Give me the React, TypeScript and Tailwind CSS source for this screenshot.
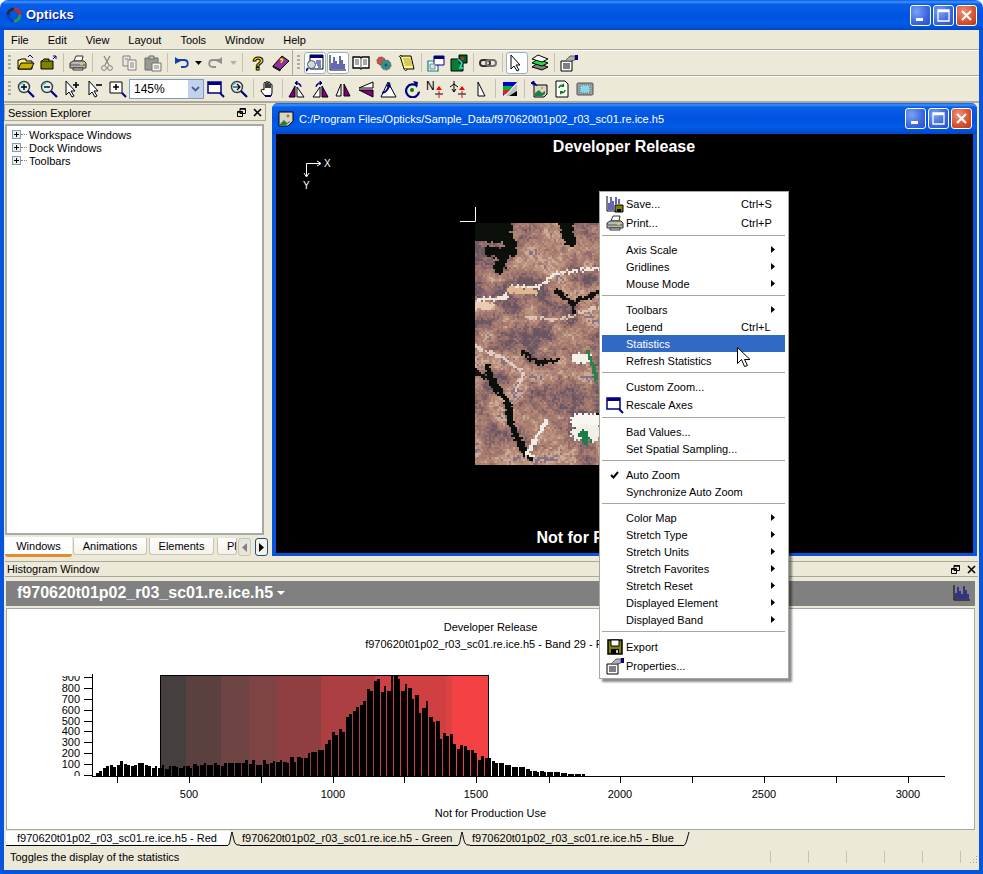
import type { ReactNode } from 'react'

// ---------- satellite picture (blocky raster built from noise + a few features)
const hash = (x: number, y: number) => {
  const s = Math.sin(x * 12.9898 + y * 78.233) * 43758.5453
  return s - Math.floor(s)
}
const smooth = (x: number, y: number) => {
  const ix = Math.floor(x)
  const iy = Math.floor(y)
  const fx = x - ix
  const fy = y - iy
  const a = hash(ix, iy) * (1 - fx) + hash(ix + 1, iy) * fx
  const b = hash(ix, iy + 1) * (1 - fx) + hash(ix + 1, iy + 1) * fx
  return a * (1 - fy) + b * fy
}
const palette = ['#6a5660', '#7d6066', '#916c6c', '#a3786f', '#b08474', '#bc937f', '#cbab98', '#8b7280']
type Feature = { pts: number[][]; r: number; c: string }
const features: Feature[] = [
  { pts: [[0, 4], [30, 4]], r: 8, c: '#0c100a' },
  { pts: [[4, 12], [32, 14], [36, 28]], r: 6, c: '#0c100a' },
  { pts: [[14, 28], [30, 30], [24, 46]], r: 5, c: '#0c100a' },
  { pts: [[92, 0], [96, 18]], r: 6, c: '#0c100a' },
  { pts: [[82, 68], [98, 81], [124, 71]], r: 2.2, c: '#14120e' },
  { pts: [[98, 81], [101, 92]], r: 2, c: '#14120e' },
  { pts: [[48, 131], [65, 141], [82, 138]], r: 2.2, c: '#14120e' },
  { pts: [[13, 145], [18, 161], [33, 181], [35, 201], [48, 228], [56, 238]], r: 3, c: '#0c100a' },
  { pts: [[0, 150], [10, 155]], r: 2, c: '#14120e' },
  { pts: [[122, 195], [124, 215]], r: 3, c: '#080818' },
  { pts: [[0, 78], [30, 76], [35, 65], [65, 65], [82, 50], [124, 45]], r: 1.3, c: '#efe6dc' },
  { pts: [[0, 84], [15, 84]], r: 4, c: '#e8cdb0' },
  { pts: [[35, 68], [60, 70]], r: 3, c: '#dfb892' },
  { pts: [[52, 95], [85, 98], [124, 85]], r: 1.3, c: '#dcc4b0' },
  { pts: [[0, 125], [28, 135], [48, 151], [42, 168]], r: 1.6, c: '#e0ccc0' },
  { pts: [[102, 136], [115, 136]], r: 5, c: '#f6f2ea' },
  { pts: [[58, 235], [52, 232], [72, 201]], r: 2, c: '#f2ece4' },
  { pts: [[104, 200], [121, 200]], r: 7, c: '#f8f6f0' },
  { pts: [[106, 212], [119, 212]], r: 8, c: '#f2f0e6' },
  { pts: [[109, 212], [112, 220]], r: 4, c: '#1f7a4c' },
  { pts: [[114, 131], [123, 158]], r: 2, c: '#2e7f4c' },
]
const segDist = (px: number, py: number, a: number[], b: number[]) => {
  const dx = b[0] - a[0]
  const dy = b[1] - a[1]
  const t = Math.max(0, Math.min(1, ((px - a[0]) * dx + (py - a[1]) * dy) / (dx * dx + dy * dy)))
  return Math.hypot(px - a[0] - t * dx, py - a[1] - t * dy)
}
const satellite = (() => {
  const groups: Record<string, string> = {}
  for (let y = 0; y < 122; y++) {
    for (let x = 0; x < 63; x++) {
      const n = smooth(x / 7, y / 7) * 0.55 + smooth(x / 2.5, y / 2.5) * 0.25 + hash(x, y) * 0.2
      let c = palette[Math.min(7, Math.max(0, Math.floor((n - 0.22) * 13)))]
      for (const f of features) {
        for (let i = 0; i < f.pts.length - 1; i++) {
          if (segDist(x * 2 + 1, y * 2 + 1, f.pts[i], f.pts[i + 1]) < f.r + (hash(x + 3, y + 9) - 0.5) * 3) c = f.c
        }
      }
      groups[c] = (groups[c] || '') + `M${x * 2} ${y * 2}h2v2h-2z`
    }
  }
  return Object.entries(groups)
})()

// ---------- histogram data
const bars = [30,50,70,90,105,85,105,135,110,105,95,100,115,115,100,95,75,90,75,100,65,90,90,78,75,90,90,72,110,90,100,115,100,100,115,105,90,118,118,118,118,118,118,148,110,148,100,105,150,110,120,135,125,148,125,118,172,125,172,165,165,210,220,220,240,240,290,330,400,375,430,400,540,565,600,630,655,690,795,780,875,890,770,830,780,925,930,890,780,845,810,710,740,580,620,690,540,495,505,340,395,370,385,295,245,280,275,240,240,210,150,185,165,165,135,115,115,118,105,100,78,85,85,85,68,45,45,40,45,40,40,40,38,38,30,25,18,22,15,15,15]
const bands: [number, number, string][] = [
  [160, 186, '#463f3f'], [186, 221, '#5b4040'], [221, 249, '#6e4343'], [249, 277, '#7e4344'],
  [277, 321, '#8f3f42'], [321, 375, '#ab3f41'], [375, 446, '#d04043'], [446, 452, '#dd4242'], [452, 488, '#f44144'],
]

// ---------- icons
const I = ({ children }: { children: ReactNode }) => (
  <svg width="18" height="18" viewBox="0 0 18 18" className="block">{children}</svg>
)
const Mag = ({ children }: { children?: ReactNode }) => (
  <I>
    <circle cx="7" cy="7" r="5.5" fill="#dff0f4" stroke="#3a3a3a" strokeWidth="1.4" />
    <path d="M3 5a4 4 0 0 1 3-2" stroke="#35c8d8" strokeWidth="1.5" fill="none" />
    <path d="M11 11l6 6" stroke="#000080" strokeWidth="2.2" />
    {children}
  </I>
)
const OpenIcon = () => (
  <I>
    <path d="M1 15V6h2l1-1h5v2h6v8z" fill="#fff27a" stroke="#000" />
    <path d="M1 15l3-6h13l-3 6z" fill="#c8b400" stroke="#000" />
    <path d="M11 3l2-2 3 3" stroke="#000080" fill="none" />
  </I>
)
const OpenDocIcon = () => (
  <I>
    <path d="M1 15V7h12v8z" fill="#808000" stroke="#000" />
    <path d="M2 7l2-2h5v2" fill="#808000" stroke="#000" />
    <path d="M13 5l3-3M13 2h3v3" stroke="#000080" fill="none" />
  </I>
)
const PrintIcon = () => (
  <I>
    <path d="M5 7l2-5h7l-1 5z" fill="#fff" stroke="#333" />
    <path d="M1 9l3-2h11l2 2v5H1z" fill="#b8b8b8" stroke="#333" />
    <path d="M1 11h16" stroke="#555" />
    <path d="M4 14h10v2H4z" fill="#e8e8e8" stroke="#333" />
    <path d="M11 10h3" stroke="#ffd800" strokeWidth="1.5" />
  </I>
)
const CutIcon = () => (
  <I>
    <path d="M6 2l5 9M12 2l-5 9" stroke="#808080" fill="none" strokeWidth="1.2" />
    <circle cx="6" cy="14" r="2.4" fill="none" stroke="#808080" />
    <circle cx="12" cy="14" r="2.4" fill="none" stroke="#808080" />
  </I>
)
const CopyIcon = () => (
  <I>
    <path d="M2 2h7v10H2z" fill="#e8e8e0" stroke="#808080" />
    <path d="M7 6h8v10H7z" fill="#f4f4ec" stroke="#808080" />
    <path d="M9 9h4M9 11h4M9 13h4M4 5h3" stroke="#808080" />
  </I>
)
const PasteIcon = () => (
  <I>
    <path d="M1 4h13v12H1z" fill="#9a9a92" stroke="#6a6a6a" />
    <path d="M5 2h5v3H5z" fill="#c8c8c0" stroke="#6a6a6a" />
    <path d="M8 9h9v8H8z" fill="#f4f4ec" stroke="#707070" />
    <path d="M10 12h5M10 14h5" stroke="#808080" />
  </I>
)
const UndoIcon = ({ c, flip }: { c: string; flip?: boolean }) => (
  <I>
    <g transform={flip ? 'translate(18 0) scale(-1 1)' : undefined}>
      <path d="M3 6h8c5 0 5 7 0 7H8" stroke={c} strokeWidth="1.8" fill="none" />
      <path d="M2 3v7l6-3z" fill={c} />
    </g>
  </I>
)
const HelpIcon = () => (
  <I>
    <text x="9" y="16" textAnchor="middle" fontSize="19" fontWeight="700" fill="#ffe800" stroke="#000" strokeWidth="1" fontFamily="Liberation Sans">?</text>
  </I>
)
const PurpleBook = () => (
  <I>
    <path d="M1 12l9-10 7 5-9 9z" fill="#9030a0" stroke="#000" />
    <path d="M1 12l7 4v1l-7-4z" fill="#f8e0a0" stroke="#000" />
    <path d="M8 6c2-2 4 0 2 1l-1 2" stroke="#ffe800" strokeWidth="1.4" fill="none" />
  </I>
)
const SessionIcon = () => (
  <I>
    <path d="M4 1h13v14H4z" fill="#fff" stroke="#000" />
    <path d="M4 1h13v3H4z" fill="#000080" />
    <path d="M10 7h5M10 9h5M11 11h4M12 13h3" stroke="#000080" />
    <circle cx="5.5" cy="10.5" r="4" fill="#c8dee8" stroke="#555" />
    <path d="M2 14l-2 3" stroke="#000080" strokeWidth="2" />
  </I>
)
const HistIcon = () => (
  <I>
    <path d="M1 1v15h16" stroke="#000" fill="none" />
    <path d="M3 15V9M5 15V3M7 15V7M9 15V10M11 15V2M13 15V6M15 15V10" stroke="#00008b" strokeWidth="1.2" />
  </I>
)
const OpenBookIcon = () => (
  <I>
    <path d="M1 3h7l1 1 1-1h7v11h-7l-1 1-1-1H1z" fill="#fff" stroke="#000" strokeWidth="1.3" />
    <path d="M9 4v11M3 6h4M3 8h4M3 10h4M11 6h4M11 8h4M11 10h4" stroke="#555" />
  </I>
)
const GearsIcon = () => (
  <I>
    <circle cx="6" cy="7" r="4" fill="#c05848" stroke="#804030" strokeDasharray="2 1" />
    <circle cx="11" cy="11" r="5" fill="#309098" stroke="#806040" strokeDasharray="2 1" />
    <circle cx="11" cy="11" r="1.5" fill="#205860" />
  </I>
)
const ScrollIcon = () => (
  <I>
    <path d="M2 2h11l3 13H6z" fill="#fff680" stroke="#000" />
    <path d="M5 5h8M6 7h8M6 9h8M7 11h8" stroke="#a8a040" />
    <path d="M1 3c1-2 3-2 3 0M6 15c1 2 3 2 3 0" stroke="#000" fill="#d8d8d0" />
  </I>
)
const WindowsIcon = () => (
  <I>
    <path d="M1 7h10v10H1z" fill="#fff" stroke="#008080" strokeWidth="1.2" />
    <path d="M7 2h10v9H7z" fill="#fff" stroke="#000080" />
    <path d="M7 2h10v3H7z" fill="#000080" />
    <path d="M3 10h5v5H3z" fill="#d0e8e8" stroke="#808080" />
  </I>
)
const GreenMapIcon = () => (
  <I>
    <path d="M1 5h12v12H1z" fill="#008030" stroke="#000" />
    <path d="M9 1h8v8H9z" fill="#006020" stroke="#000" />
    <path d="M8 5l4 4-2 5h3" stroke="#20e0e0" strokeWidth="1.5" fill="none" />
    <path d="M11 3h3v3h-3zM3 9h1v1H3zM5 13h1v1H5z" fill="#b03020" />
  </I>
)
const LinkIcon = () => (
  <I>
    <rect x="1" y="6" width="10" height="6" rx="3" fill="none" stroke="#303030" strokeWidth="2" />
    <rect x="7" y="6" width="10" height="6" rx="3" fill="none" stroke="#707070" strokeWidth="2" />
  </I>
)
const ArrowIcon = ({ children }: { children?: ReactNode }) => (
  <I>
    <path d="M3 1v14l3-3 3 5 2-1-3-5h4z" fill="#fff" stroke="#000" />
    {children}
  </I>
)
const LayersIcon = () => (
  <I>
    <path d="M1 13l6-4 10 4-6 3z" fill="#808080" stroke="#000" />
    <path d="M1 9l6-4 10 4-6 3z" fill="#20e040" stroke="#000" />
    <path d="M1 5l6-4 10 4-6 3z" fill="#fff" stroke="#000" />
  </I>
)
const PropsIcon = () => (
  <I>
    <path d="M1 7h11v10H1z" fill="#fff" stroke="#000" />
    <path d="M3 10h7M3 12h7M3 14h7" stroke="#000" />
    <path d="M5 7l5-5h5v4l-5 1z" fill="#b0b0b0" stroke="#606060" />
    <path d="M15 1h3v5h-3z" fill="#000080" />
  </I>
)
const BoxZoomIcon = () => (
  <I>
    <path d="M1 2h12v11H1z" fill="#fff" stroke="#000" />
    <path d="M4 7h6M7 4v6" stroke="#000" strokeWidth="1.5" />
    <path d="M13 13l4 4" stroke="#000080" strokeWidth="2" />
  </I>
)
const FitIcon = () => (
  <I>
    <path d="M1 2h13v11H1z" fill="#fff" stroke="#000080" strokeWidth="1.5" />
    <path d="M1 2h13v3H1z" fill="#000080" />
    <path d="M13 13l4 4" stroke="#000080" strokeWidth="2" />
  </I>
)
const HandIcon = () => (
  <I>
    <path d="M5 9V3.5a1 1 0 0 1 2 0V8V2.5a1 1 0 0 1 2 0V8V3a1 1 0 0 1 2 0v5V5a1 1 0 0 1 2 0v8l-1 3H6l-4-5c0-2 2-2 3-1z" fill="#fff" stroke="#000" />
    <path d="M6 16h6" stroke="#000080" strokeWidth="2" />
  </I>
)
const purple = '#800080'
const TriIcon = ({ v }: { v: number }) => {
  if (v === 0)
    return (
      <I>
        <path d="M1 17l6-11v11z" fill={purple} stroke="#000" />
        <path d="M9 17V7l7 10z" fill="#fff" stroke="#000" />
        <path d="M13 7c0-3-2-4-4-4M9 1v4l-2-2z" stroke="#000080" fill="#000080" />
      </I>
    )
  if (v === 1)
    return (
      <I>
        <path d="M2 17l7-10v10z" fill="#fff" stroke="#000" />
        <path d="M11 17V6l6 11z" fill={purple} stroke="#000" />
        <path d="M5 7c0-3 2-4 4-4M9 1v4l2-2z" stroke="#000080" fill="#000080" />
      </I>
    )
  if (v === 2)
    return (
      <I>
        <path d="M2 16l5-12v12z" fill="#fff" stroke="#000" />
        <path d="M10 16V4l6 12z" fill={purple} stroke="#000" />
      </I>
    )
  if (v === 3)
    return (
      <I>
        <path d="M2 8l14-6v6z" fill="#fff" stroke="#000" />
        <path d="M2 10l14 7v-7z" fill={purple} stroke="#000" />
      </I>
    )
  return (
    <I>
      <path d="M8 2l8 15H1z" fill="#fff" stroke="#000" />
      <path d="M2 13c3 0 6-3 7-8" stroke="#000080" strokeWidth="2" fill="none" />
      <path d="M6 6l4-4 1 6z" fill="#000080" />
    </I>
  )
}
const RotateIcon = () => (
  <I>
    <path d="M14 6a6.5 6.5 0 1 0 2 6" stroke="#000080" strokeWidth="2.2" fill="none" />
    <path d="M10 1l5 1-1 6z" fill="#000080" />
    <circle cx="9" cy="10" r="2" fill="#008000" />
    <path d="M16 11h1v1h-1z" fill="#808080" />
  </I>
)
const NorthIcon = () => (
  <I>
    <text x="0" y="10" fontSize="12" fontFamily="Liberation Sans" fill="#000">N</text>
    <path d="M13 18V7" stroke="#f00" strokeDasharray="3 1" />
    <path d="M10 10l3-4 3 4z" fill="#f00" />
    <path d="M9 14h8" stroke="#000" />
  </I>
)
const CompassIcon = () => (
  <I>
    <path d="M5 1v11M1 7l4-3 4 3M3 9l2 3 2-3" stroke="#000" fill="none" />
    <path d="M13 18V7" stroke="#f00" strokeDasharray="3 1" />
    <path d="M10 10l3-4 3 4z" fill="#f00" />
    <path d="M9 14h8" stroke="#000" />
  </I>
)
const ThinTri = () => (
  <I>
    <path d="M6 2l7 14H6z" fill="#fff" stroke="#000" />
  </I>
)
const ColorIcon = () => (
  <I>
    <path d="M2 2h14L2 16z" fill="#0000d0" />
    <path d="M2 2h14l-4 4H2z" fill="#0000d0" />
    <path d="M2 6h10l-3 4H2z" fill="#00b030" />
    <path d="M2 10h7l-4 4H2z" fill="#e02020" />
    <path d="M16 4v12H5z" fill="#c0c0c0" />
    <path d="M16 11v5H8z" fill="#000" />
  </I>
)
const ImageArrowIcon = () => (
  <I>
    <path d="M4 5h13v9l-3 3H4z" fill="#d8d4c8" stroke="#000" />
    <path d="M5 13l4-3 3 3 3-2v3l-3 2H5z" fill="#208040" />
    <circle cx="12" cy="8" r="1" fill="#c0a000" />
    <path d="M1 3h4l2 3M1 3l3-2v4z" stroke="#000080" fill="#000080" />
  </I>
)
const RefreshDocIcon = () => (
  <I>
    <path d="M3 1h9l3 3v13H3z" fill="#fff" stroke="#000" />
    <path d="M6 8a3 3 0 0 1 5-2M12 10a3 3 0 0 1-5 2" stroke="#008000" strokeWidth="1.5" fill="none" />
    <path d="M11 3v4h-3zM7 15v-4h3z" fill="#008000" />
  </I>
)
const MonitorIcon = () => (
  <I>
    <rect x="1" y="3" width="16" height="12" rx="1" fill="#a0a0a0" stroke="#505050" />
    <rect x="4" y="5" width="10" height="8" fill="#88d8e8" stroke="#607080" strokeDasharray="1 1" />
  </I>
)
const SaveIcon = () => (
  <I>
    <path d="M2 2h14v14H2z" fill="#808000" stroke="#000" strokeWidth="1.5" />
    <path d="M5 2h8v6H5z" fill="#fff" stroke="#000" />
    <path d="M5 11h8v5H5z" fill="#000" />
    <path d="M10 12h2v3h-2z" fill="#c0c0c0" />
  </I>
)
const HistSaveIcon = () => (
  <I>
    <path d="M1 1v15h8" stroke="#000" fill="none" />
    <path d="M3 15V8M5 15V2M7 15V6M10 9V2M13 9V4" stroke="#00008b" strokeWidth="1.2" />
    <path d="M9 10h8v7H9z" fill="#808000" stroke="#000" />
    <path d="M11 14h4v3h-4z" fill="#000" />
  </I>
)
const TreePlus = () => (
  <span className="relative w-[9px] h-[9px] border border-[#7f9db9] bg-[#eeeee6] flex items-center justify-center shrink-0">
    <span className="absolute w-[5px] h-[1px] bg-black" />
    <span className="absolute w-[1px] h-[5px] bg-black" />
  </span>
)

// ---------- chrome pieces
const Grip = ({ className = 'w-[10px]' }: { className?: string }) => (
  <span className={`flex justify-center shrink-0 ${className}`}>
    <span className="w-[3px] h-[16px] bg-[repeating-linear-gradient(to_bottom,#b0ad9c_0_2px,transparent_2px_4px)]" />
  </span>
)
const Sep = ({ className = 'w-[6px]' }: { className?: string }) => (
  <span className={`flex justify-center shrink-0 ${className}`}>
    <span className="w-[1px] h-[19px] bg-[#c5c2b0]" />
  </span>
)
const Btn = ({ children, active, className = 'w-[23px]' }: { children?: ReactNode; active?: boolean; className?: string }) => (
  <span className={`flex items-center justify-center h-[24px] shrink-0 ${className}`}>
    <span className={`flex items-center justify-center w-[22px] h-[22px] rounded-[3px] ${active ? 'bg-white border border-[#9ab1cc]' : ''}`}>
      {children}
    </span>
  </span>
)
const Drop = ({ c }: { c: string }) => (
  <span className="w-[10px] flex justify-center shrink-0">
    <svg width="7" height="4" viewBox="0 0 7 4"><path d="M0 0h7L3.5 4z" fill={c} /></svg>
  </span>
)
const ToolRow = ({ children }: { children: ReactNode }) => (
  <div className="h-[26px] flex items-center border-t border-[#aca899] shadow-[inset_0_1px_0_#fff] shrink-0">{children}</div>
)
const WinBtn = ({ kind }: { kind: 'min' | 'max' | 'close' }) => (
  <span
    className={`w-[21px] h-[21px] rounded-[3px] border border-white flex items-center justify-center shrink-0 ${
      kind === 'close'
        ? 'bg-[radial-gradient(circle_at_35%_30%,#f09078,#d8502c_60%,#b83a18)]'
        : 'bg-[radial-gradient(circle_at_30%_30%,#7ba2f2,#3a66e0_60%,#2650c8)]'
    }`}
  >
    <svg width="13" height="13" viewBox="0 0 13 13">
      {kind === 'min' && <path d="M2 9h7v3H2z" fill="#fff" />}
      {kind === 'max' && <path d="M1 1h11v11H1zM1 2.5h11" fill="none" stroke="#fff" strokeWidth="1.3" />}
      {kind === 'close' && <path d="M2 2l9 9M11 2l-9 9" stroke="#fff" strokeWidth="2.2" />}
    </svg>
  </span>
)
const DockBtns = () => (
  <span className="flex items-center gap-[7px] shrink-0">
    <svg width="9" height="9" viewBox="0 0 9 9"><path d="M3 .5h5.5v5H3zM.5 3.5h5v5h-5z" fill="#ece9d8" stroke="#000" /><path d="M3 1h5.5M.5 4h5" stroke="#000" strokeWidth="1.4" /></svg>
    <svg width="9" height="9" viewBox="0 0 9 9"><path d="M1 1l7 7M8 1l-7 7" stroke="#000" strokeWidth="1.6" /></svg>
  </span>
)
const DockTab = ({ label, className }: { label: string; className: string }) => (
  <span className={`mt-[3px] h-[17px] border border-[#c8c4b4] border-t-0 rounded-b-[3px] bg-[linear-gradient(to_bottom,#fff,#f4f2ea)] flex items-center justify-center shrink-0 overflow-hidden ${className}`}>
    {label}
  </span>
)

type MenuItem =
  | { sep: true }
  | { label: string; short?: string; sub?: boolean; icon?: ReactNode; check?: boolean; hot?: boolean; tall?: boolean }
const menu: MenuItem[] = [
  { label: 'Save...', short: 'Ctrl+S', icon: <HistSaveIcon />, tall: true },
  { label: 'Print...', short: 'Ctrl+P', icon: <PrintIcon />, tall: true },
  { sep: true },
  { label: 'Axis Scale', sub: true },
  { label: 'Gridlines', sub: true },
  { label: 'Mouse Mode', sub: true },
  { sep: true },
  { label: 'Toolbars', sub: true },
  { label: 'Legend', short: 'Ctrl+L' },
  { label: 'Statistics', hot: true },
  { label: 'Refresh Statistics' },
  { sep: true },
  { label: 'Custom Zoom...' },
  { label: 'Rescale Axes', icon: <FitIcon />, tall: true },
  { sep: true },
  { label: 'Bad Values...' },
  { label: 'Set Spatial Sampling...' },
  { sep: true },
  { label: 'Auto Zoom', check: true },
  { label: 'Synchronize Auto Zoom' },
  { sep: true },
  { label: 'Color Map', sub: true },
  { label: 'Stretch Type', sub: true },
  { label: 'Stretch Units', sub: true },
  { label: 'Stretch Favorites', sub: true },
  { label: 'Stretch Reset', sub: true },
  { label: 'Displayed Element', sub: true },
  { label: 'Displayed Band', sub: true },
  { sep: true },
  { label: 'Export', icon: <SaveIcon />, tall: true },
  { label: 'Properties...', icon: <PropsIcon />, tall: true },
]

const ContextMenu = () => (
  <div className="absolute left-[599px] top-[191px] w-[190px] h-[488px] bg-white border border-[#aca899] pt-[2px] pl-[2px] pr-[3px] shadow-[3px_3px_2px_rgba(0,0,0,0.45)] z-10">
    {menu.map((m, i) =>
      'sep' in m ? (
        <div key={i} className="h-[9px] pt-[3px]"><div className="h-[1px] bg-[#aca899]" /></div>
      ) : (
        <div key={i} className={`flex items-center ${m.tall ? 'h-[19px]' : 'h-[17px]'} ${m.hot ? 'bg-[#316ac5] text-white' : ''}`}>
          <span className="w-[24px] pl-[1px] flex items-center justify-center shrink-0">
            {m.icon}
            {m.check && <svg width="9" height="8" viewBox="0 0 9 8"><path d="M1 4l2.5 2.5L8 1" stroke="#000" strokeWidth="2" fill="none" /></svg>}
          </span>
          <span className="w-[115px] shrink-0 whitespace-nowrap">{m.label}</span>
          <span className="flex-1 whitespace-nowrap">{m.short}</span>
          {m.sub && <svg width="4" height="7" viewBox="0 0 4 7" className="mr-[10px]"><path d="M0 0l4 3.5L0 7z" fill="#000" /></svg>}
        </div>
      ),
    )}
  </div>
)

const Tail = ({ fill, peak = true }: { fill?: string; peak?: boolean }) => (
  <svg width="12" height="15" viewBox="0 0 12 15" className="shrink-0 block">
    {fill && <path d="M0 0h3L0 15z" fill={fill} />}
    <path d={peak ? 'M0 14c2 0 2-6 4-13c2 7 2 13 6 13h2' : 'M0 14c2 0 2-6 4-13'} stroke="#000" fill="none" />
  </svg>
)

export default function App() {
  return (
    <div className="w-[983px] h-[874px] flex flex-col overflow-hidden bg-white text-[11px] leading-[14px] text-black font-['Liberation_Sans',sans-serif]">
      {/* title bar */}
      <div className="h-[30px] shrink-0 rounded-t-[8px] flex items-center pl-[6px] pr-[6px] bg-[linear-gradient(to_bottom,#0a5ae0_0px,#3d95ff_2px,#0a5fe8_4px,#0053e0_16px,#005ce8_24px,#0046c8_30px)]">
        <svg width="16" height="16" viewBox="0 0 16 16" className="mr-[4px]">
          <g fill="none" strokeWidth="3">
            <path d="M8 2a6 6 0 0 1 6 6" stroke="#d02818" />
            <path d="M14 8a6 6 0 0 1-6 6" stroke="#20a040" />
            <path d="M8 14a6 6 0 0 1-6-6" stroke="#1040c0" />
            <path d="M2 8a6 6 0 0 1 6-6" stroke="#1c3048" />
          </g>
        </svg>
        <span className="flex-1 text-[13px] font-bold text-white [text-shadow:1px_1px_0_#0f1089]">Opticks</span>
        <span className="flex gap-[2px]">
          <WinBtn kind="min" />
          <WinBtn kind="max" />
          <WinBtn kind="close" />
        </span>
      </div>

      {/* window body */}
      <div className="flex-1 min-h-0 flex flex-col border-x-4 border-b-4 border-[#0855dd] bg-[#ece9d8]">
        <div className="h-[19px] shrink-0 flex items-center gap-[19px] pl-[7px]">
          <span>File</span>
          <span>Edit</span>
          <span>View</span>
          <span>Layout</span>
          <span>Tools</span>
          <span>Window</span>
          <span>Help</span>
        </div>

        <ToolRow>
          <Grip />
          <Btn><OpenIcon /></Btn>
          <Btn><OpenDocIcon /></Btn>
          <Sep />
          <Btn><PrintIcon /></Btn>
          <Sep />
          <Btn><CutIcon /></Btn>
          <Btn><CopyIcon /></Btn>
          <Btn><PasteIcon /></Btn>
          <Sep />
          <Btn><UndoIcon c="#1040a8" /></Btn>
          <Drop c="#000" />
          <Btn className="w-[24px]"><UndoIcon c="#909090" flip /></Btn>
          <span className="w-[12px] flex justify-center"><Drop c="#b0b0b0" /></span>
          <Sep className="w-[7px]" />
          <Btn><HelpIcon /></Btn>
          <Btn><PurpleBook /></Btn>
          <span className="w-[1px] h-[26px] bg-[#aca899]" />
          <Grip />
          <Btn active><SessionIcon /></Btn>
          <Btn active><HistIcon /></Btn>
          <Btn><OpenBookIcon /></Btn>
          <Btn><GearsIcon /></Btn>
          <Btn><ScrollIcon /></Btn>
          <Sep />
          <Btn><WindowsIcon /></Btn>
          <Btn><GreenMapIcon /></Btn>
          <Sep />
          <Btn><LinkIcon /></Btn>
          <Sep />
          <Btn active><ArrowIcon /></Btn>
          <Btn><LayersIcon /></Btn>
          <Sep />
          <Btn><PropsIcon /></Btn>
        </ToolRow>

        <ToolRow>
          <Grip />
          <Btn><Mag><path d="M4 7h6M7 4v6" stroke="#000" strokeWidth="1.4" /></Mag></Btn>
          <Btn><Mag><path d="M4 7h6" stroke="#000" strokeWidth="1.4" /></Mag></Btn>
          <Btn><ArrowIcon><path d="M10 5h6M13 2v6" stroke="#000" strokeWidth="1.6" /></ArrowIcon></Btn>
          <Btn><ArrowIcon><path d="M10 5h6" stroke="#000" strokeWidth="1.6" /></ArrowIcon></Btn>
          <Btn><BoxZoomIcon /></Btn>
          <span className="w-[75px] h-[20px] shrink-0 border border-[#7f9db9] bg-white flex items-center pl-[4px]">
            <span className="flex-1 text-[12px]">145%</span>
            <span className="w-[15px] h-[18px] bg-[#c1d2ee] flex items-center justify-center">
              <svg width="9" height="6" viewBox="0 0 9 6"><path d="M1 1l3.5 3.5L8 1" stroke="#4d6185" strokeWidth="1.8" fill="none" /></svg>
            </span>
          </span>
          <Btn><FitIcon /></Btn>
          <Btn><Mag><path d="M3 7h7M7 4l3 3-3 3" stroke="#000" fill="none" strokeWidth="1.2" /></Mag></Btn>
          <Sep />
          <Btn><HandIcon /></Btn>
          <Sep />
          <Btn><TriIcon v={0} /></Btn>
          <Btn><TriIcon v={1} /></Btn>
          <Btn><TriIcon v={2} /></Btn>
          <Btn><TriIcon v={3} /></Btn>
          <Btn><TriIcon v={4} /></Btn>
          <Btn><RotateIcon /></Btn>
          <Btn><NorthIcon /></Btn>
          <Btn><CompassIcon /></Btn>
          <Btn><ThinTri /></Btn>
          <Sep />
          <Btn><ColorIcon /></Btn>
          <Sep />
          <Btn><ImageArrowIcon /></Btn>
          <Btn><RefreshDocIcon /></Btn>
          <Btn><MonitorIcon /></Btn>
        </ToolRow>
        <div className="h-[2px] bg-[#aca899] shrink-0" />

        {/* session explorer + image window */}
        <div className="h-[456px] shrink-0 flex">
          <div className="w-[262px] shrink-0 flex flex-col pt-[1px]">
            <div className="h-[17px] border border-[#aca899] flex items-center justify-between pl-[3px] pr-[3px] shrink-0">
              <span>Session Explorer</span>
              <DockBtns />
            </div>
            <div className="mt-[3px] ml-[1px] mr-[2px] h-[411px] border-2 border-[#a5aba5] bg-white pt-[2px] pl-[5px] shrink-0">
              {['Workspace Windows', 'Dock Windows', 'Toolbars'].map((t) => (
                <div key={t} className="h-[13px] flex items-center">
                  <TreePlus />
                  <span className="w-[6px] h-[1px] border-t border-dotted border-[#808080] mr-[2px]" />
                  <span>{t}</span>
                </div>
              ))}
            </div>
            <div className="h-[22px] flex gap-[1px] pl-[1px]">
              <span className="mt-[2px] w-[67px] h-[20px] bg-white border-b-[3px] border-[#e68b2c] rounded-b-[3px] flex items-center justify-center shrink-0">Windows</span>
              <DockTab label="Animations" className="w-[74px]" />
              <DockTab label="Elements" className="ml-[1px] w-[65px]" />
              <DockTab label="Plots" className="ml-[2px] w-[20px] justify-start pl-[9px]" />
              <span className="mt-[3px] w-[13px] h-[18px] border border-[#c8c4b4] rounded-[3px] bg-[#e8e6dc] flex items-center justify-center shrink-0">
                <svg width="5" height="9" viewBox="0 0 5 9"><path d="M5 0L0 4.5 5 9z" fill="#808080" /></svg>
              </span>
              <span className="ml-[3px] mt-[3px] w-[13px] h-[18px] border border-[#1c5180] rounded-[3px] bg-[#f4f2ea] flex items-center justify-center shrink-0">
                <svg width="5" height="9" viewBox="0 0 5 9"><path d="M0 0l5 4.5L0 9z" fill="#000" /></svg>
              </span>
            </div>
          </div>

          <div className="ml-[6px] w-[705px] h-[453px] flex flex-col border-x-4 border-b-[3px] border-[#0855dd] rounded-t-[6px] shrink-0">
            <div className="-mx-[4px] h-[31px] shrink-0 rounded-t-[6px] flex items-center pl-[6px] pr-[5px] gap-[5px] text-white bg-[linear-gradient(to_bottom,#0a5ae0_0px,#3d95ff_2px,#0a5fe8_4px,#0053e0_16px,#005ce8_24px,#0046c8_31px)]">
              <svg width="16" height="16" viewBox="0 0 16 16">
                <path d="M1 1h14v9l-5 5H1z" fill="#d8d4c8" stroke="#000" />
                <path d="M2 13l4-4 3 3 3-2v1l-4 3H2z" fill="#208040" />
                <circle cx="10" cy="5" r="1.4" fill="#a08000" />
              </svg>
              <span className="flex-1 whitespace-nowrap">C:/Program Files/Opticks/Sample_Data/f970620t01p02_r03_sc01.re.ice.h5</span>
              <span className="flex gap-[2px]">
                <WinBtn kind="min" />
                <WinBtn kind="max" />
                <WinBtn kind="close" />
              </span>
            </div>
            <div className="relative flex-1 bg-black text-white text-[16px] leading-[18px] font-bold flex flex-col items-center justify-between pt-[4px] pb-[6px] pr-[1px] overflow-hidden">
              <span>Developer Release</span>
              <span>Not for Production Use</span>
              <svg width="36" height="36" viewBox="0 0 36 36" className="absolute left-[25px] top-[24px]">
                <path d="M5.5 18V5.5H19M16 3l4 2.5-4 2.5M3 15l2.5 4 2.5-4" stroke="#fff" fill="none" />
                <text x="23" y="9" fontSize="10" fill="#fff" fontWeight="400" fontFamily="Liberation Sans">X</text>
                <text x="2" y="31" fontSize="10" fill="#fff" fontWeight="400" fontFamily="Liberation Sans">Y</text>
              </svg>
              <svg width="16" height="16" viewBox="0 0 16 16" className="absolute left-[184px] top-[73px]">
                <path d="M15.5 0v14.5H0" stroke="#fff" fill="none" />
              </svg>
              <svg width="125" height="244" viewBox="0 0 126 244" shapeRendering="crispEdges" className="absolute left-[199px] top-[88px]">
                {satellite.map(([c, d]) => (
                  <path key={c} d={d} fill={c} />
                ))}
              </svg>
            </div>
          </div>
        </div>

        {/* histogram window */}
        <div className="mx-[1px] mt-[2px] h-[16px] shrink-0 border-y border-[#aca899] flex items-center justify-between pl-[2px] pr-[2px]">
          <span>Histogram Window</span>
          <DockBtns />
        </div>
        <div className="ml-[2px] mr-[4px] mt-[4px] h-[25px] shrink-0 bg-[#808080] flex items-start justify-between pl-[11px] pr-[4px] text-white">
          <span className="h-[19px] mt-[1px] overflow-hidden text-[16px] leading-[21px] font-bold whitespace-nowrap flex items-start">
            f970620t01p02_r03_sc01.re.ice.h5
            <svg width="8" height="4" viewBox="0 0 8 4" className="ml-[4px] mt-[9px]"><path d="M0 0h8L4 4z" fill="#fff" /></svg>
          </span>
          <span className="mt-[3px]"><HistIcon /></span>
        </div>
        <div className="ml-[2px] mr-[4px] mt-[2px] h-[222px] shrink-0 bg-white border border-[#aca899] flex flex-col items-center">
          <div className="mt-[11px] h-[14px] whitespace-nowrap">Developer Release</div>
          <div className="mt-[3px] h-[14px] whitespace-nowrap">f970620t01p02_r03_sc01.re.ice.h5 - Band 29 - Red</div>
          <svg width="967" height="130" viewBox="7 676 967 130" shapeRendering="crispEdges" className="mt-[21px] shrink-0 block">
            <defs>
              <clipPath id="ylabels"><rect x="50" y="680" width="40" height="100" /></clipPath>
            </defs>
            {bands.map(([a, b, c]) => (
              <rect key={a} x={a} y="680" width={b - a} height="100" fill={c} />
            ))}
            <path d="M160.5 780V679.5H488.5V780" fill="none" stroke="#000" />
            {bars.map((v, i) => {
              const x0 = Math.round(96 + 3.47 * i)
              const x1 = Math.round(96 + 3.47 * (i + 1))
              return <rect key={i} x={x0} y={780 - v * 0.109} width={x1 - x0 - (i % 2 ? 1 : 0)} height={v * 0.109} fill="#000" />
            })}
            <rect x="92" y="678" width="1" height="103" fill="#000" />
            <rect x="92" y="780" width="853" height="1" fill="#000" />
            {[0, 100, 200, 300, 400, 500, 600, 700, 800, 900].map((v) => (
              <g key={v}>
                <rect x="84" y={Math.round(779 - v * 0.109)} width="9" height="1" fill="#000" />
                <text x="80" y={783 - v * 0.109} textAnchor="end" fontSize="11" clipPath="url(#ylabels)" shapeRendering="auto">{v}</text>
              </g>
            ))}
            {[117, 189, 261, 333, 404, 476, 549, 620, 692, 764, 836, 908].map((x) => (
              <rect key={x} x={x} y="780" width="1" height="7" fill="#000" />
            ))}
            {[[189, 500], [333, 1000], [476, 1500], [620, 2000], [764, 2500], [908, 3000]].map(([x, l]) => (
              <text key={l} x={x} y="802" textAnchor="middle" fontSize="11">{l}</text>
            ))}
          </svg>
          <div className="mt-[4px] h-[14px] whitespace-nowrap">Not for Production Use</div>
        </div>

        {/* sheet tabs */}
        <div className="ml-[2px] mt-[1px] h-[15px] shrink-0 flex">
          <span className="w-[222px] bg-white border-b border-black pl-[11px] whitespace-nowrap overflow-hidden shrink-0 h-[15px]">f970620t01p02_r03_sc01.re.ice.h5 - Red</span>
          <Tail fill="#fff" />
          <span className="w-[218px] border-b border-black pl-[2px] whitespace-nowrap overflow-hidden shrink-0 h-[15px]">f970620t01p02_r03_sc01.re.ice.h5 - Green</span>
          <Tail />
          <span className="w-[214px] border-b border-black pl-[2px] whitespace-nowrap overflow-hidden shrink-0 h-[15px]">f970620t01p02_r03_sc01.re.ice.h5 - Blue</span>
          <svg width="6" height="15" viewBox="0 0 6 15" className="shrink-0 block"><path d="M0 14c2 0 3-6 5-13" stroke="#000" fill="none" /></svg>
        </div>

        {/* status bar */}
        <div className="mt-[2px] h-[18px] shrink-0 flex items-center pl-[6px] relative">
          <span className="w-[760px] shrink-0">Toggles the display of the statistics</span>
          {[0, 1, 2, 3, 4, 5].map((i) => (
            <span key={i} className="w-[38px] h-[12px] flex shrink-0"><span className="w-[1px] h-[12px] bg-[#c5c2b0]" /></span>
          ))}
          <svg width="9" height="9" viewBox="0 0 9 9" className="absolute right-[1px] bottom-[2px]">
            <path d="M7 1h1v1H7zM4 4h1v1H4zM7 4h1v1H7zM1 7h1v1H1zM4 7h1v1H4zM7 7h1v1H7z" fill="#aca899" />
          </svg>
        </div>
      </div>

      <ContextMenu />

      {/* mouse pointer */}
      <svg width="14" height="21" viewBox="0 0 14 21" className="absolute left-[737px] top-[347px] z-20">
        <path d="M.5.5v16l4-4 3 7 3-1-3-6h5.5z" fill="#fff" stroke="#000" />
      </svg>
    </div>
  )
}
